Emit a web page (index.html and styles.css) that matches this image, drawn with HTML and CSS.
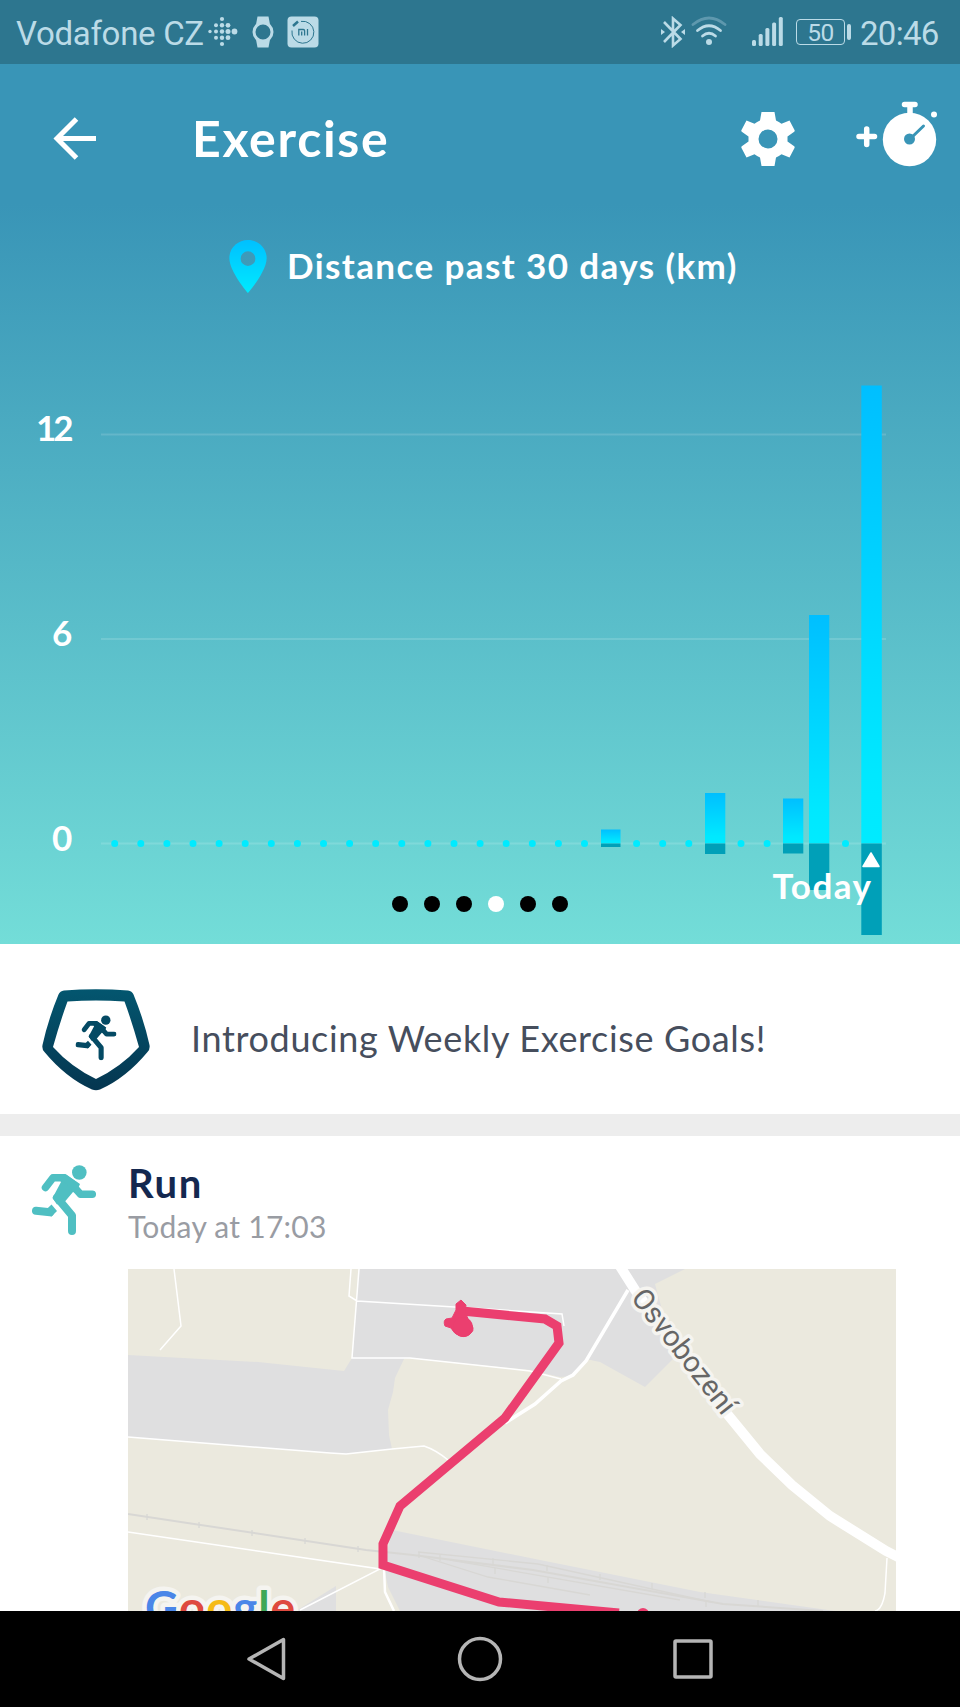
FILE: index.html
```html
<!DOCTYPE html>
<html lang="en">
<head>
    <meta charset="UTF-8">
    <meta name="viewport" content="width=device-width, initial-scale=1.0">
    <title>Exercise</title>
    <link rel="stylesheet" href="styles.css">
</head>
<body>

    <!-- Shared runner shape -->
    <svg class="defs" width="0" height="0">
        <symbol id="runner" viewBox="0 0 64 70">
            <circle cx="47.3" cy="7.5" r="7.3" fill="currentColor"/>
            <path d="M24 9h9l15 10-4 9-3-1-8 9.500-8 3-4.500-6.500L29 17z" fill="currentColor"/>
            <g fill="none" stroke="currentColor" stroke-width="7.500" stroke-linecap="round" stroke-linejoin="round">
                <path d="M13.500 22.500L21 12.700h11.500l10 7.300M39 18.500l9.500 10.800h11.800"/>
                <path d="M25 32.500L40 50.500V66" stroke-width="8"/>
                <path d="M4 45.800l14 1.500" stroke-width="8"/>
            </g>
            <path d="M15 43.800l4.500-4.300 5.500 6.500-6 6z" fill="currentColor"/>
        </symbol>
    </svg>

    <!-- Status bar -->
    <div class="status-bar">
        <span class="carrier">Vodafone CZ</span>
        <svg class="ic-fitbit" width="30" height="32" viewBox="0 0 30 32">
            <circle cx="2" cy="15.500" r="1.700"/>
            <circle cx="8" cy="9.300" r="2"/><circle cx="8" cy="15.500" r="2"/><circle cx="8" cy="21.700" r="2"/>
            <circle cx="14" cy="3" r="2.100"/><circle cx="14" cy="9.300" r="2.200"/><circle cx="14" cy="15.500" r="2.200"/><circle cx="14" cy="21.700" r="2.200"/><circle cx="14" cy="28" r="2.100"/>
            <circle cx="20" cy="9.300" r="2.400"/><circle cx="20" cy="15.500" r="2.500"/><circle cx="20" cy="21.700" r="2.400"/>
            <circle cx="26.500" cy="15.500" r="2.900"/>
        </svg>
        <svg class="ic-watch" width="22" height="32" viewBox="0 0 22 32">
            <path d="M5.500 .5h11l1.500 8H4zM4 23.500h14l-1.500 8h-11z"/>
            <circle cx="11" cy="16" r="9" fill="#2d768f" stroke="#bbdbe7" stroke-width="3"/>
        </svg>
        <svg class="ic-mi" width="32" height="32" viewBox="0 0 32 32">
            <rect x=".5" y=".5" width="31" height="31" rx="4"/>
            <path d="M14 5.400A11 11 0 1 1 5 14.500" fill="none" stroke="#2d768f" stroke-width="1"/>
            <path d="M6 10l5-4.500" stroke="#2d768f" stroke-width="2.500"/>
            <path d="M11.800 19.500v-6h4.500q1.300 0 1.300 1.300v4.700M14.700 15.500v4M20.500 13v6.500" fill="none" stroke="#2d768f" stroke-width="1.300"/>
        </svg>
        <div class="status-right">
            <svg width="24" height="32" viewBox="0 0 24 32">
                <path d="M3 6l16.500 17-7.500 6.500V2.500L19.500 9 3 26" fill="none" stroke="#bbdbe7" stroke-width="2.600"/>
                <path d="M0 13l4 3-4 3zM24 13l-4 3 4 3z"/>
            </svg>
            <svg class="ic-wifi" width="36" height="32" viewBox="0 0 36 32">
                <g fill="none" stroke="#bbdbe7" stroke-width="2.800" stroke-linecap="round">
                    <path d="M2 8.500q16-13 32 0" opacity=".35"/>
                    <path d="M6.500 14.500q11.500-9.500 23 0"/>
                    <path d="M11.500 20q6.500-5.500 13 0"/>
                </g>
                <circle cx="18" cy="26" r="3"/>
            </svg>
            <svg class="ic-signal" width="32" height="32" viewBox="0 0 32 32">
                <rect x="0" y="24" width="4" height="6" rx="1.500"/>
                <rect x="6.700" y="18" width="4" height="12" rx="1.500"/>
                <rect x="13.400" y="12" width="4" height="18" rx="1.500"/>
                <rect x="20.100" y="6.500" width="4" height="23.500" rx="1.500"/>
                <rect x="26.800" y="1" width="4" height="29" rx="1.500"/>
            </svg>
            <span class="battery">50</span>
            <span class="battery-tip"></span>
            <span class="clock">20:46</span>
        </div>
    </div>

    <div class="hero">
        <!-- Toolbar -->
        <div class="toolbar">
            <svg class="back" width="44" height="44" viewBox="0 0 44 44">
                <path d="M43 21.500H4M23.500 2L4 21.500 23.500 41" fill="none" stroke="#fff" stroke-width="5"/>
            </svg>
            <h1>Exercise</h1>
            <svg class="gear" width="54" height="54" viewBox="0 0 54 54">
                <path fill="#fff" fill-rule="evenodd" d="M20.500 0h13l1.500 8.500q3 1.200 5.500 3.200l8-3.200 5 9.500q.5 1-.3 1.700L46.500 24.500v5l6.700 4.800q.8.700.3 1.700l-5 9.500-8-3.200q-2.500 2-5.500 3.200L33.500 54h-13L19 45.500q-3-1.200-5.500-3.200l-8 3.200-5-9.500q-.5-1 .3-1.700l6.700-4.800v-5L.8 19.700q-.8-.7-.3-1.700l5-9.500 8 3.200Q16 9.700 19 8.500zM27 17.500a9.500 9.500 0 1 0 0 19 9.500 9.500 0 0 0 0-19z"/>
            </svg>
            <svg class="timer" width="82" height="66" viewBox="0 0 82 66">
                <path d="M3 35.500h15.500M10.700 28v15.500M48.500 3.500H59M54 4v12" stroke="#fff" stroke-width="5.500" stroke-linecap="round"/>
                <circle cx="53.500" cy="38.500" r="26.700" fill="#fff"/>
                <circle cx="78" cy="13.500" r="3" fill="#fff"/>
                <circle cx="53.500" cy="38" r="5.500" fill="#3995b7"/>
                <path d="M54 38l13.500-13" stroke="#3995b7" stroke-width="3" stroke-linecap="round"/>
            </svg>
        </div>

        <div class="chart-title">
            <svg width="38" height="53" viewBox="0 0 38 54">
                <defs>
                    <linearGradient id="pin" x1="0" y1="0" x2="0" y2="1">
                        <stop offset="0" stop-color="#00c0ff"/>
                        <stop offset="1" stop-color="#00eaff"/>
                    </linearGradient>
                </defs>
                <path fill="url(#pin)" fill-rule="evenodd" d="M19 0C8.500 0 0 8 0 18.500 0 32 19 54 19 54s19-22 19-35.500C38 8 29.500 0 19 0zm0 11.500a7.500 7.500 0 1 1 0 15 7.500 7.500 0 0 1 0-15z"/>
            </svg>
            <span>Distance past 30 days (km)</span>
        </div>

        <!-- Distance chart, one slot per day -->
        <svg class="chart" width="960" height="574" viewBox="0 370 960 574">
            <defs>
                <linearGradient id="bar" x1="0" y1="0" x2="0" y2="1">
                    <stop offset="0" stop-color="#00bfff"/>
                    <stop offset=".85" stop-color="#00e8ff"/>
                    <stop offset="1" stop-color="#00ebff"/>
                </linearGradient>
            </defs>
            <g fill="#fff" fill-opacity=".14">
                <rect x="101" y="433.500" width="785" height="2"/>
                <rect x="101" y="638" width="785" height="2"/>
                <rect x="101" y="842.500" width="785" height="2"/>
            </g>
            <!-- empty days -->
            <g stroke="#00ebff" stroke-width="7" stroke-linecap="round" fill="none">
                <path d="M114.700 843.500H585" stroke-dasharray="0 26.100"/>
                <path d="M636.600 843.500H690" stroke-dasharray="0 26.100"/>
                <path d="M741 843.500H770" stroke-dasharray="0 26.100"/>
                <path d="M845.500 843.500h.01"/>
            </g>
            <g fill="url(#bar)">
                <rect x="601" y="829.500" width="19.500" height="14"/>
                <rect x="705" y="793" width="20.300" height="50.500"/>
                <rect x="783" y="798.500" width="20.300" height="45"/>
                <rect x="809" y="615" width="20.300" height="228.500"/>
                <rect x="861.300" y="385.500" width="20.500" height="458"/>
            </g>
            <g fill="#00a0b8">
                <rect x="601" y="843.500" width="19.500" height="3.500"/>
                <rect x="705" y="843.500" width="20.300" height="10.500"/>
                <rect x="783" y="843.500" width="20.300" height="10"/>
                <rect x="809" y="843.500" width="20.300" height="46.500"/>
                <rect x="861.300" y="843.500" width="20.500" height="91.500"/>
            </g>
            <path d="M871 853l8 13.500h-16z" fill="#fff" stroke="#fff" stroke-width="1.500" stroke-linejoin="round"/>
            <g class="axis">
                <text class="twelve" x="36" y="441">12</text>
                <text x="52" y="645.500">6</text>
                <text x="52" y="850.500">0</text>
                <text class="today" x="772.500" y="899">Today</text>
            </g>
        </svg>

        <div class="pager">
            <i></i><i></i><i></i><i class="active"></i><i></i><i></i>
        </div>
    </div>

    <!-- Goals promo -->
    <div class="promo">
        <svg width="108" height="102" viewBox="0 0 108 102">
            <defs>
                <linearGradient id="badge" x1="0" y1="0" x2="0" y2="1">
                    <stop offset="0" stop-color="#03566f"/>
                    <stop offset="1" stop-color="#053650"/>
                </linearGradient>
            </defs>
            <path fill="url(#badge)" fill-rule="evenodd" d="M22 1.500Q54-1 86 1.500q4 .5 5.500 4Q102 31 107.500 56q.8 4-2 7Q84 89 58 100.500q-4 1.500-8 0Q24 89 2.500 63q-2.800-3-2-7Q6 31 16.500 5.500 18 2 22 1.500zM25.500 12.500Q18 33 11 58q18 20 43 32 25-12 43-32-7-25-14.500-45.500-28.500-2-57 0z"/>
            <use class="badge-runner" href="#runner" x="33.500" y="26" width="41" height="45.500"/>
        </svg>
        <span>Introducing Weekly Exercise Goals!</span>
    </div>

    <!-- Activity entry -->
    <div class="activity">
        <svg class="run-icon" width="64" height="70"><use href="#runner" width="64" height="70"/></svg>
        <div class="details">
            <h2>Run</h2>
            <p>Today at 17:03</p>
            <svg class="map" width="768" height="342" viewBox="128 1269 768 342">
                <rect x="128" y="1269" width="768" height="342" fill="#ebe9de"/>
                <g fill="#dfdfe0">
                    <path d="M128 1355l130 7 86 9 8-13 7-89h326l-30 15 20 73-30 30-45-25-14-3-13 17-13 1-30-7-120-12-6 1-9 19-2 14-5 18 1 25 3 14-46 5-16-1-202-16z"/>
                    <path d="M392 1530l148 30 160 32 135 19H400l-12-24-4-20z"/>
                    <path d="M336 1586v25h-40z"/>
                </g>
                <!-- paths -->
                <g fill="none" stroke="#fff" stroke-width="1.500">
                    <path d="M174 1269l7 57-21 24M351 1269l-2 27 8 5 130 8 75 5 2 12M359 1269l-7 89h58l120 13 31 8"/>
                    <path d="M128 1437l202 16 16 1 46-5 32-3q12 4 24 14M128 1532l252 37-80 41"/>
                    <path d="M384 1568l1 24 9 19" stroke-width="2.500"/>
                    <path d="M628 1290l-42 71-13 14-12 6-26 23-30 19" stroke-width="3.500"/>
                    <path d="M887 1558l-2 35q-3 17-10 18"/>
                </g>
                <!-- railway -->
                <g fill="none" stroke="#d8d7d4" stroke-width="1.300">
                    <path d="M128 1514l238 36 47 5 120 15 190 34 100 7" stroke-width="2"/>
                    <path d="M418 1552l120 12 173 38M418 1555l70 22 102 18M450 1560l230 40"/>
                    <path d="M147 1514v6M199 1522v6M252 1530v6M305 1538v6M358 1546v6M419 1552v6M440 1555v6M493 1558v6M547 1565v6M600 1574v6M652 1583v6M705 1592v6M758 1600v6M495 1568v6M548 1577v6M706 1602v5"/>
                </g>
                <path d="M618 1263l17 27 45 62 48 63 32 39 32 31 38 31 56 35 16 8" fill="none" stroke="#fff" stroke-width="10"/>
                <text class="street" transform="translate(630 1298) rotate(52)">Osvobození</text>
                <!-- recorded route -->
                <path d="M462 1311l83 8 12 7 2 17-54 75-105 88-17 38v21l116 37 120 11" fill="none" stroke="#eb3f6f" stroke-width="9"/>
                <path d="M461 1300l5 5-1 7 4 9q7 8 2 12-4 5-11 3-6-2-9-8l-6-2q-2-5 1-7l6-1 4-8v-6z" fill="#eb3f6f" stroke="#eb3f6f"/>
                <circle cx="463" cy="1327" r="10" fill="#eb3f6f"/>
                <circle cx="643" cy="1614" r="6" fill="#eb3f6f"/>
                <text class="google" x="145" y="1624"><tspan fill="#4a86e8">G</tspan><tspan fill="#de4a3f">o</tspan><tspan fill="#f5bb16">o</tspan><tspan fill="#4a86e8">g</tspan><tspan fill="#3fa757">l</tspan><tspan fill="#de4a3f">e</tspan></text>
            </svg>
        </div>
    </div>

    <!-- System navigation -->
    <div class="nav-bar">
        <svg width="48" height="48" viewBox="0 0 48 48"><path d="M40.500 4.500v39L6 24z"/></svg>
        <svg width="48" height="48" viewBox="0 0 48 48"><circle cx="24" cy="24" r="20.500"/></svg>
        <svg width="48" height="48" viewBox="0 0 48 48"><rect x="6" y="6" width="36" height="36" rx="1"/></svg>
    </div>

</body>
</html>
```
FILE: styles.css
```css
* {
    box-sizing: border-box;
}
body {
    margin: 0;
    width: 960px;
    height: 1707px;
    overflow: hidden;
    display: flex;
    flex-direction: column;
    font-family: Lato, sans-serif;
    background: #fff;
}
svg {
    display: block;
    flex-shrink: 0;
}
h1, h2, p {
    margin: 0;
}
.defs {
    position: absolute;
}

/* Status bar */
.status-bar {
    height: 64px;
    flex-shrink: 0;
    display: flex;
    align-items: center;
    padding: 0 22px 0 16px;
    background: #2d768f;
    color: #bbdbe7;
    fill: #bbdbe7;
    font-family: Roboto, sans-serif;
    font-size: 32px;
    white-space: nowrap;
}
.carrier {
    width: 192px;
    font-size: 33px;
    letter-spacing: -0.3px;
    padding-top: 2px;
}
.ic-watch {
    margin-left: 14px;
}
.ic-mi {
    margin-left: 13px;
}
.status-right {
    display: flex;
    align-items: center;
    margin-left: auto;
}
.ic-wifi {
    margin-left: 6px;
}
.ic-signal {
    margin: 0 12px 0 25px;
}
.battery {
    width: 49px;
    height: 26px;
    border: 1.500px solid #bbdbe7;
    border-radius: 4px;
    font-size: 24.500px;
    line-height: 25px;
    letter-spacing: -0.5px;
    text-align: center;
}
.battery-tip {
    width: 4px;
    height: 16px;
    margin-left: 2px;
    border-radius: 2px;
    background: #bbdbe7;
}
.clock {
    width: 78px;
    margin-left: 9px;
    padding-top: 2px;
    font-size: 33px;
    letter-spacing: -0.700px;
}

/* Header and chart */
.hero {
    position: relative;
    height: 880px;
    flex-shrink: 0;
    background: linear-gradient(#3995b7 0, #3995b7 140px, #73ddd8 880px);
    color: #fff;
}
.toolbar {
    height: 150px;
    display: flex;
    align-items: center;
    padding: 0 22px 0 53px;
}
.back {
    margin-right: 95px;
}
h1 {
    font-size: 50px;
    line-height: 60px;
    font-weight: 700;
    letter-spacing: 1.700px;
    margin: 0 auto 3px 0;
}
.gear {
    margin-right: 61px;
}
.timer {
    margin-top: -10px;
}
.chart-title {
    height: 156px;
    display: flex;
    align-items: flex-start;
    padding: 26px 0 0 229px;
    gap: 20px;
    font-size: 35px;
    line-height: 50px;
    font-weight: 700;
    letter-spacing: 1.400px;
    white-space: nowrap;
}
.axis {
    fill: #fff;
    font-size: 35px;
    font-weight: 700;
}
.twelve {
    letter-spacing: -3px;
}
.today {
    letter-spacing: 1.500px;
}
.pager {
    position: absolute;
    left: 392px;
    top: 832px;
    display: flex;
    gap: 16px;
}
.pager i {
    width: 16px;
    height: 16px;
    border-radius: 50%;
    background: #000;
}
.pager .active {
    background: #fff;
}

/* Promo row */
.promo {
    height: 192px;
    flex-shrink: 0;
    display: flex;
    align-items: flex-start;
    padding: 45px 0 0 42px;
    gap: 41px;
    border-bottom: 22px solid #ededed;
    color: #464e5d;
    font-size: 36px;
    line-height: 99px;
    letter-spacing: 0.650px;
    white-space: nowrap;
}
.badge-runner {
    color: #044a64;
}

/* Activity */
.activity {
    height: 475px;
    flex-shrink: 0;
    display: flex;
    padding: 29px 0 0 32px;
    overflow: hidden;
}
.run-icon {
    color: #4fbfc2;
    margin-right: 32px;
}
h2 {
    font-size: 40px;
    line-height: 36px;
    letter-spacing: 1.600px;
    color: #14284f;
}
.details p {
    height: 68px;
    padding-top: 7px;
    font-size: 30px;
    line-height: 37px;
    letter-spacing: 0.250px;
    color: #999ca3;
}
.street {
    font-family: Roboto, sans-serif;
    font-size: 29px;
    fill: #666;
    stroke: #f5f4f0;
    stroke-width: 7px;
    stroke-linejoin: round;
    paint-order: stroke;
}
.google {
    font-size: 46px;
    font-weight: 700;
    letter-spacing: 0.800px;
    stroke: #f5f4f0;
    stroke-width: 9px;
    stroke-linejoin: round;
    paint-order: stroke;
}

/* Android buttons */
.nav-bar {
    height: 96px;
    flex-shrink: 0;
    display: flex;
    justify-content: center;
    align-items: center;
    gap: 165px;
    background: #000;
    fill: none;
    stroke: #b5b5b5;
    stroke-width: 3.500;
    stroke-linejoin: round;
}
```
